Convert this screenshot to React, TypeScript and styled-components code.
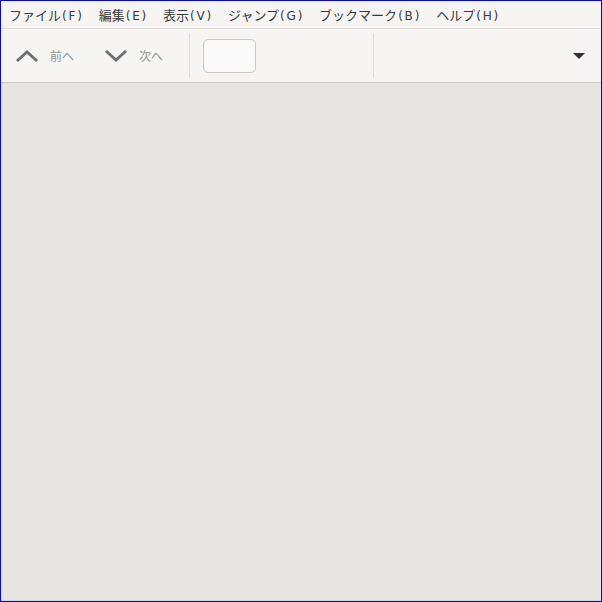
import React from 'react'
import styled, { createGlobalStyle } from 'styled-components'

const Global = createGlobalStyle`
  html, body {
    margin: 0;
    padding: 0;
    background: #ffffff;
  }
  body {
    font-family: "Noto Sans CJK JP", "Noto Sans", sans-serif;
  }
`

const Window = styled.div`
  box-sizing: border-box;
  width: 602px;
  height: 602px;
  border: 1px solid #0000ff;
  display: flex;
  flex-direction: column;
  background: #e8e4e1;
`

const MenuBar = styled.nav`
  display: flex;
  align-items: center;
  height: 27px;
  padding: 0 0 0 8px;
  background: #f6f5f4;
  border-bottom: 1px solid #dcd8d4;
  flex-shrink: 0;
`

const MenuItem = styled.span`
  display: flex;
  align-items: baseline;
  font-size: 13px;
  color: #363a3b;
  margin-right: 17px;
  line-height: 27px;
  padding-top: 1px;
`

const Mnemonic = styled.span`
  font-family: "DejaVu Sans", sans-serif;
  font-size: 12px;
  letter-spacing: 1.8px;
  margin-left: 1px;
  margin-right: -2px;
`

const Toolbar = styled.div`
  display: flex;
  align-items: center;
  height: 53px;
  background: #f6f5f4;
  border-bottom: 1px solid #cdc7c2;
  flex-shrink: 0;
`

const NavButton = styled.button<{ $w: number }>`
  all: unset;
  box-sizing: border-box;
  display: flex;
  align-items: center;
  gap: 11px;
  padding-left: 14px;
  width: ${p => p.$w}px;
  height: 100%;
  color: #929595;
  font-size: 12px;
`

const Separator = styled.div`
  width: 1px;
  align-self: stretch;
  margin: 4px 0;
  background: #dcd8d4;
`

const Entry = styled.div`
  box-sizing: border-box;
  width: 53px;
  height: 34px;
  margin: 0 117px 0 13px;
  border: 1px solid #cdc7c2;
  border-radius: 5px;
  background: #fafafa;
`

const Spacer = styled.div`
  flex: 1;
`

const MenuArrow = styled.div`
  width: 0;
  height: 0;
  margin-right: 16px;
  border-left: 6px solid transparent;
  border-right: 6px solid transparent;
  border-top: 6px solid #2e3436;
`

const Content = styled.main`
  flex: 1;
  background: #e8e4e1;
  border-bottom: 1px solid #d6d1cd;
`

const Chevron = ({ down }: { down?: boolean }) => (
  <svg width="24" height="14" viewBox="0 0 24 14">
    <path
      d={down ? 'M2 2 L12 11 L22 2' : 'M2 12 L12 3 L22 12'}
      fill="none"
      stroke="#6e7173"
      strokeWidth="3"
    />
  </svg>
)

const menus: [string, string][] = [
  ['ファイル', 'F'],
  ['編集', 'E'],
  ['表示', 'V'],
  ['ジャンプ', 'G'],
  ['ブックマーク', 'B'],
  ['ヘルプ', 'H'],
]

export default function App() {
  return (
    <>
      <Global />
      <Window>
        <MenuBar>
          {menus.map(([label, key]) => (
            <MenuItem key={key}>
              {label}
              <Mnemonic>({key})</Mnemonic>
            </MenuItem>
          ))}
        </MenuBar>
        <Toolbar>
          <NavButton $w={89}>
            <Chevron />
            <span>前へ</span>
          </NavButton>
          <NavButton $w={99}>
            <Chevron down />
            <span>次へ</span>
          </NavButton>
          <Separator />
          <Entry />
          <Separator />
          <Spacer />
          <MenuArrow />
        </Toolbar>
        <Content />
      </Window>
    </>
  )
}
